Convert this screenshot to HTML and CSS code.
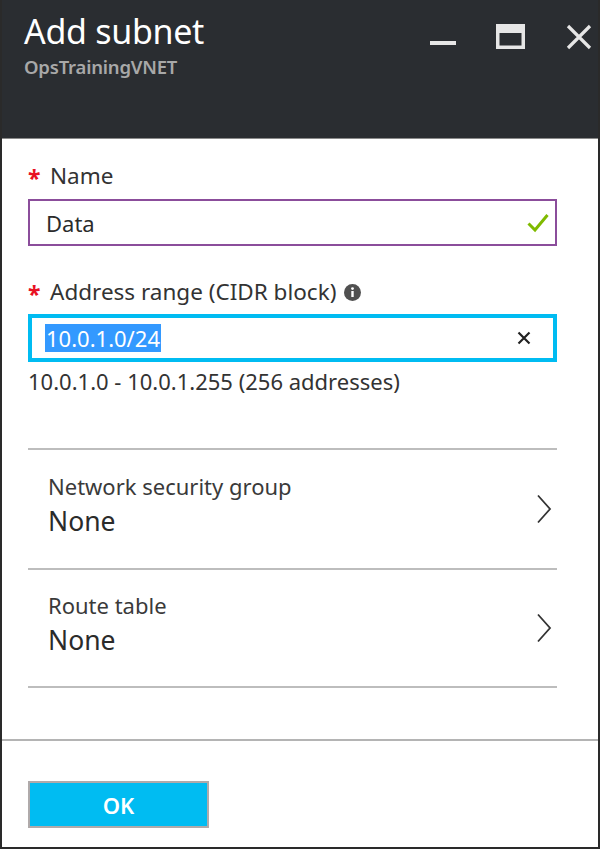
FILE: index.html
```html
<!DOCTYPE html>
<html lang="en">
<head>
<meta charset="utf-8">
<title>Add subnet</title>
<link rel="stylesheet" href="styles.css">
</head>
<body>
<div class="window">
  <header class="header">
    <div class="titles">
      <h1 class="title">Add subnet</h1>
      <div class="subtitle">OpsTrainingVNET</div>
    </div>
    <div class="controls">
      <svg class="ctl ctl-min" width="26" height="26" viewBox="0 0 26 26"><rect x="0" y="21" width="26" height="4" fill="#e6e6e6"/></svg>
      <svg class="ctl ctl-max" width="29" height="26" viewBox="0 0 29 26"><rect x="1.75" y="1.75" width="25.5" height="21.5" fill="none" stroke="#e6e6e6" stroke-width="3.5"/><rect x="0" y="0" width="29" height="9" fill="#e6e6e6"/></svg>
      <svg class="ctl ctl-close" width="26" height="26" viewBox="0 0 26 26"><path d="M2 2 L24 24 M24 2 L2 24" stroke="#e6e6e6" stroke-width="3.2" fill="none"/></svg>
    </div>
  </header>

  <main class="body">
    <div class="field">
      <label class="label"><span class="req">*</span>Name</label>
      <div class="input input-valid">
        <span class="value">Data</span>
        <svg class="check" width="22" height="20" viewBox="0 0 22 20"><path d="M1.5 10.5 L8 17 L20.5 2" stroke="#7fba00" stroke-width="3" fill="none"/></svg>
      </div>
    </div>

    <div class="field field-addr">
      <label class="label"><span class="req">*</span>Address range (CIDR block)
        <svg class="info" width="17" height="17" viewBox="0 0 17 17"><circle cx="8.5" cy="8.5" r="8.5" fill="#505050"/><rect x="7.3" y="7" width="2.4" height="6" fill="#fff"/><circle cx="8.5" cy="4.6" r="1.4" fill="#fff"/></svg>
      </label>
      <div class="input input-focus">
        <span class="value selected">10.0.1.0/24</span>
        <svg class="clear" width="14" height="14" viewBox="0 0 14 14"><path d="M1.5 1.5 L12.5 12.5 M12.5 1.5 L1.5 12.5" stroke="#222" stroke-width="2.2" fill="none"/></svg>
      </div>
      <div class="hint">10.0.1.0 - 10.0.1.255 (256 addresses)</div>
    </div>

    <div class="list">
      <div class="row">
        <div class="row-text">
          <div class="row-label">Network security group</div>
          <div class="row-value">None</div>
        </div>
        <svg class="chev" width="16" height="30" viewBox="0 0 16 30"><path d="M2 1.5 L14 15 L2 28.5" stroke="#333" stroke-width="1.8" fill="none"/></svg>
      </div>
      <div class="row">
        <div class="row-text">
          <div class="row-label">Route table</div>
          <div class="row-value">None</div>
        </div>
        <svg class="chev" width="16" height="30" viewBox="0 0 16 30"><path d="M2 1.5 L14 15 L2 28.5" stroke="#333" stroke-width="1.8" fill="none"/></svg>
      </div>
    </div>
  </main>

  <footer class="footer">
    <button class="ok">OK</button>
  </footer>
</div>
</body>
</html>
```

FILE: styles.css
```css
* { box-sizing: border-box; }
html, body { margin: 0; padding: 0; }
body {
  width: 600px;
  height: 849px;
  font-family: "Noto Sans", "Open Sans", sans-serif;
  color: #2b2b2b;
  background: #fff;
}
.window {
  width: 600px;
  height: 849px;
  border: 2px solid #2a2a2a;
  border-top: none;
  display: flex;
  flex-direction: column;
  overflow: hidden;
}
.header {
  height: 139px;
  background: #2a2d31;
  border-bottom: 1px solid #8a8a8a;
  display: flex;
  justify-content: space-between;
  padding: 9px 0 0 22px;
  flex-shrink: 0;
}
.title {
  margin: 0;
  font-size: 34px;
  font-weight: 400;
  color: #fff;
  line-height: 44px;
  letter-spacing: -0.3px;
}
.subtitle {
  margin-top: 3px;
  font-size: 18.5px;
  font-weight: 600;
  color: #a8a8a8;
  line-height: 22px;
  letter-spacing: -0.2px;
}
.controls {
  display: flex;
  align-items: flex-start;
  padding-top: 15px;
}
.ctl { display: block; }
.ctl-min { margin-right: 40px; margin-top: -4px; }
.ctl-max { margin-right: 41px; }
.ctl-close { margin-right: 6px; }

.body {
  flex: 1;
  padding: 22px 41px 0 26px;
}
.field { display: flex; flex-direction: column; }
.field-addr { margin-top: 31px; }
.label {
  font-size: 22.5px;
  line-height: 30px;
  color: #333;
  display: flex;
  align-items: center;
}
.req {
  color: #e81123;
  font-size: 23px;
  font-weight: 700;
  width: 22px;
  line-height: 30px;
  position: relative;
  top: 2px;
}
.info { margin-left: 8px; }
.input {
  margin-top: 8px;
  height: 47px;
  display: flex;
  align-items: center;
  justify-content: space-between;
  font-size: 22px;
}
.input-valid {
  border: 2px solid #8b4d9b;
  padding: 0 6px 0 16px;
}
.input-focus {
  margin-top: 7px;
  height: 48px;
  border: 4px solid #00bcf2;
  padding: 0 22px 0 13px;
}
.value { line-height: 28px; color: #2b2b2b; }
.selected { background: #3399ff; color: #fff; padding: 0 1px; }
.hint {
  font-size: 22px;
  line-height: 28px;
  color: #333;
  margin-top: 5px;
}
.list { margin-top: 53px; }
.row {
  border-top: 2px solid #bdbdbd;
  height: 120px;
  display: flex;
  align-items: center;
  justify-content: space-between;
  padding: 0 5px 0 20px;
}
.row:last-child { border-bottom: 2px solid #bdbdbd; }
.row-text { margin-top: -7px; }
.row-label { font-size: 22px; line-height: 30px; color: #3a3a3a; }
.row-value { font-size: 26.5px; line-height: 40px; color: #2b2b2b; }

.footer {
  border-top: 2px solid #b4b4b4;
  height: 108px;
  flex-shrink: 0;
  padding: 40px 0 0 26px;
}
.ok {
  width: 181px;
  height: 47px;
  background: #00bcf2;
  border: 2px solid #b0aaaa;
  color: #fff;
  font-family: "Noto Sans", "Open Sans", sans-serif;
  font-size: 22px;
  font-weight: 600;
  padding: 0;
}
```
